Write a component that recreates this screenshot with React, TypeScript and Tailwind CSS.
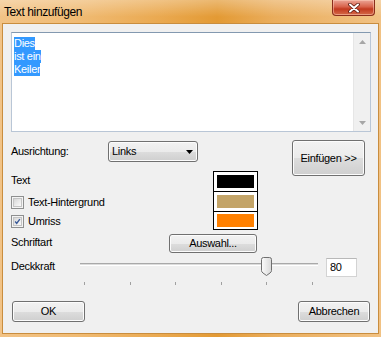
import React from "react";

const btn =
  "flex items-center justify-center rounded-[3px] border border-[#707070] bg-[linear-gradient(to_bottom,#f2f2f2_0%,#ebebeb_50%,#dddddd_51%,#cfcfcf_100%)] shadow-[inset_0_0_0_1px_#fcfcfc] text-black";

const CheckBox = ({ checked }: { checked?: boolean }) => (
  <div className="w-[13px] h-[13px] border border-[#8e8f8f] bg-[#f4f4f4] p-[1px] shrink-0">
    <div className="w-full h-full border border-[#c4c4c4] bg-[linear-gradient(135deg,#d6d6d6_0%,#f0f0f0_70%,#fafafa_100%)] flex items-center justify-center">
      {checked && (
        <svg width="9" height="9" viewBox="0 0 9 9">
          <path d="M1.5 4.5 L3.5 7 L7.5 1.5" stroke="#3a5a98" strokeWidth="1.8" fill="none" />
        </svg>
      )}
    </div>
  </div>
);

const Swatch = ({ color, pad }: { color: string; pad: string }) => (
  <div className={`w-[45px] border border-black bg-white px-[3px] ${pad} -mt-px first:mt-0`}>
    <div className={`h-[13px] ${color}`} />
  </div>
);

const ticks = [0, 1, 2, 3, 4, 5];

export default function App() {
  return (
    <div className="w-[381px] h-[337px] flex flex-col font-['Liberation_Sans',Arial,sans-serif] bg-[linear-gradient(90deg,#f2c386_0%,#f0bb74_20%,#eaa950_42%,#e39a34_57%,#eaad5c_72%,#f1c284_100%)]">
      {/* title bar */}
      <div className="h-[24px] flex items-start bg-[linear-gradient(to_bottom,rgba(255,255,255,0.3),rgba(255,255,255,0)_70%)]">
        <span className="mt-[5px] ml-[4px] text-[12px] leading-[14px] tracking-[-0.4px] text-black">
          Text hinzufügen
        </span>
        <div className="ml-auto mr-[6px] w-[43px] h-[16px] rounded-b-[4px] border border-t-0 border-[#8a2d1b] bg-[linear-gradient(to_bottom,#eba596_0%,#d8634b_45%,#c23a20_60%,#d56a48_100%)] shadow-[inset_0_0_0_1px_rgba(255,210,190,0.5)] flex items-center justify-center">
          <svg width="12" height="10" viewBox="0 0 12 10">
            <path d="M2 1.5 L10 8.5 M10 1.5 L2 8.5" stroke="#5a1a10" strokeWidth="3.6" strokeLinecap="round" />
            <path d="M2 1.5 L10 8.5 M10 1.5 L2 8.5" stroke="#ffffff" strokeWidth="2" strokeLinecap="round" />
          </svg>
        </div>
      </div>

      {/* client area */}
      <div className="mx-[3px] h-[309px] bg-[#f0f0f0] shadow-[0_0_0_1px_#c98d3e] flex flex-col text-[11px] leading-[13px] tracking-[-0.3px] text-black">
        {/* text box */}
        <div className="mt-[8px] ml-[8px] w-[360px] h-[100px] flex border border-[#b9c6d6] border-t-[#8399b0] bg-white">
          <div className="flex-1 pl-[2px] pt-[4px] flex flex-col items-start">
            <span className="bg-[#3399ff] text-white">Dies</span>
            <span className="bg-[#3399ff] text-white">ist ein</span>
            <span className="bg-[#3399ff] text-white">Keiler</span>
          </div>
          <div className="w-[17px] flex flex-col justify-between bg-[#f0f0f0] border-l border-[#e6e6e6]">
            <div className="h-[17px] flex items-center justify-center">
              <svg width="7" height="4" viewBox="0 0 7 4">
                <path d="M0 4 L3.5 0 L7 4 Z" fill="#a6a6a6" />
              </svg>
            </div>
            <div className="h-[17px] flex items-center justify-center">
              <svg width="7" height="4" viewBox="0 0 7 4">
                <path d="M0 0 L3.5 4 L7 0 Z" fill="#a6a6a6" />
              </svg>
            </div>
          </div>
        </div>

        {/* options */}
        <div className="mt-[8px] flex">
          <div className="w-[289px] pl-[8px] flex flex-col">
            <div className="mt-[1px] h-[21px] flex items-center">
              <span className="w-[97px]">Ausrichtung:</span>
              <div className={`${btn} w-[90px] h-[21px] !justify-between pl-[3px] pr-[4px]`}>
                <span>Links</span>
                <svg width="7" height="4" viewBox="0 0 7 4">
                  <path d="M0 0 L3.5 4 L7 0 Z" fill="#000" />
                </svg>
              </div>
            </div>
            <div className="flex">
              <div className="w-[158px] flex flex-col">
                <span className="mt-[12px] h-[13px]">Text</span>
                <label className="mt-[9px] h-[13px] flex items-center gap-[4px]">
                  <CheckBox />
                  <span>Text-Hintergrund</span>
                </label>
                <label className="mt-[6px] h-[13px] flex items-center gap-[4px]">
                  <CheckBox checked />
                  <span>Umriss</span>
                </label>
                <span className="mt-[8px] h-[13px]">Schriftart</span>
              </div>
              <div className="flex flex-col">
                <div className="ml-[44px] mt-[9px] flex flex-col">
                  <Swatch color="bg-black" pad="py-[3px]" />
                  <Swatch color="bg-[#c3a468]" pad="py-[3px]" />
                  <Swatch color="bg-[#ff8000]" pad="py-[2px]" />
                </div>
                <div className={`${btn} mt-[4px] w-[88px] h-[19px]`}>Auswahl...</div>
              </div>
            </div>
          </div>
          <div className={`${btn} w-[73px] h-[36px]`}>Einfügen &gt;&gt;</div>
        </div>

        {/* opacity */}
        <div className="mt-[4px] pl-[8px] flex items-start">
          <span className="w-[69px] mt-[3px]">Deckkraft</span>
          <div className="relative w-[238px] h-[28px]">
            <div className="absolute left-0 right-0 top-[6px] h-[3px] border-t border-[#a9a9a9] border-b border-b-white bg-[#dcdcdc]" />
            <svg className="absolute left-[181px] top-0" width="11" height="19" viewBox="0 0 11 19">
              <defs>
                <linearGradient id="th" x1="0" y1="0" x2="1" y2="0">
                  <stop offset="0" stopColor="#fbfbfb" />
                  <stop offset="1" stopColor="#d8d8d8" />
                </linearGradient>
              </defs>
              <path
                d="M0.5 2.5 Q0.5 0.5 2.5 0.5 H8.5 Q10.5 0.5 10.5 2.5 V13.5 Q10.5 15 9 16 L5.5 18.5 L2 16 Q0.5 15 0.5 13.5 Z"
                fill="url(#th)"
                stroke="#6f6f6f"
              />
            </svg>
            {ticks.map((i) => (
              <div
                key={i}
                className="absolute top-[25px] w-px h-[3px] bg-[#a0a0a0]"
                style={{ left: `${Math.round(4 + i * 45.6)}px` }}
              />
            ))}
          </div>
          <div className="ml-[8px] mt-[1px] w-[31px] h-[19px] border border-[#d3d3d3] border-t-[#b8b8b8] bg-white pl-[3px] flex items-center">
            80
          </div>
        </div>

        {/* buttons */}
        <div className="mt-auto mb-[11px] pl-[9px] pr-[8px] flex justify-between">
          <div className={`${btn} w-[73px] h-[21px]`}>OK</div>
          <div className={`${btn} w-[72px] h-[21px]`}>Abbrechen</div>
        </div>
      </div>
      <div className="flex-1" />
    </div>
  );
}
